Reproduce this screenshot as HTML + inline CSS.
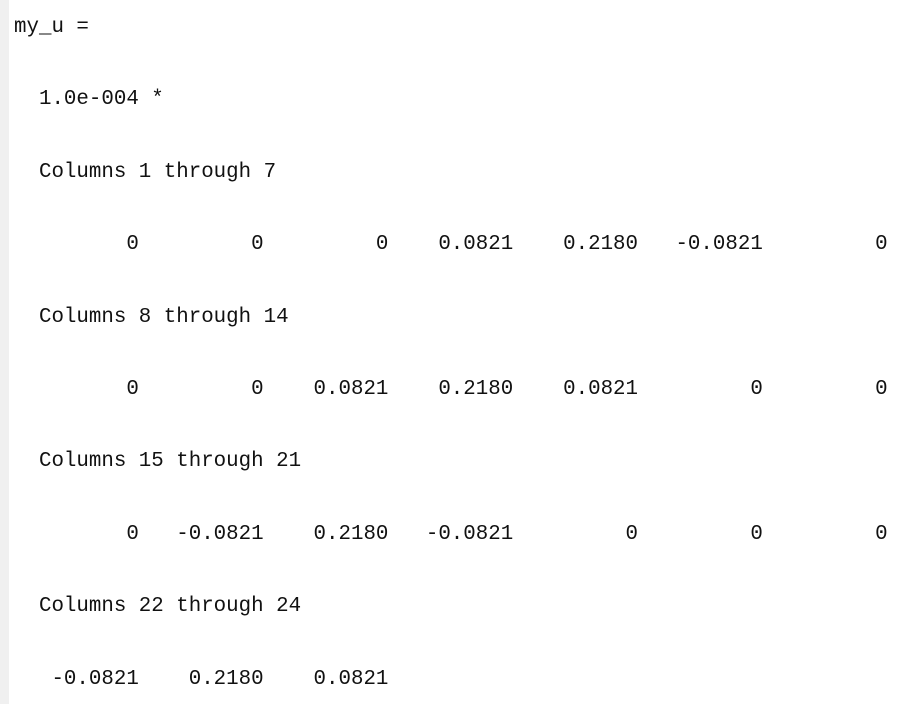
<!DOCTYPE html>
<html><head><meta charset="utf-8"><style>
html,body{margin:0;padding:0;background:#fff;width:912px;height:704px;overflow:hidden}
.bar{position:absolute;left:0;top:0;width:9px;height:704px;background:#f0f0f0}
pre{position:absolute;left:14px;top:10px;margin:0;font-family:"Liberation Mono","Noto Sans CJK SC",monospace;font-size:20.8px;line-height:36.2px;color:#111}
</style></head><body>
<div class="bar"></div>
<pre>my_u =

  1.0e-004 *

  Columns 1 through 7

         0         0         0    0.0821    0.2180   -0.0821         0

  Columns 8 through 14

         0         0    0.0821    0.2180    0.0821         0         0

  Columns 15 through 21

         0   -0.0821    0.2180   -0.0821         0         0         0

  Columns 22 through 24

   -0.0821    0.2180    0.0821</pre>
</body></html>
